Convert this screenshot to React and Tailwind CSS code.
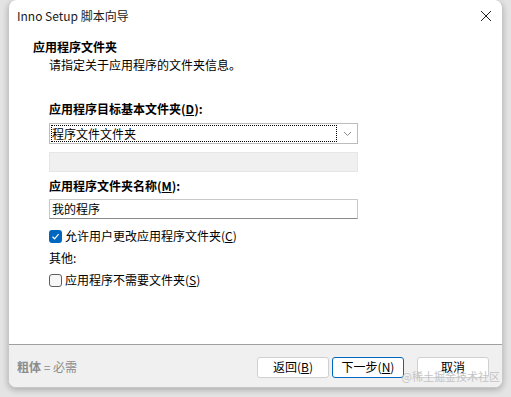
import React from "react";

const F = { fontFamily: '"Noto Sans CJK SC", "Noto Sans", sans-serif' };

function U({ children }) {
  return <span className="underline underline-offset-1">{children}</span>;
}

function Box({ checked }) {
  return checked ? (
    <span className="w-[13px] h-[13px] rounded-[3px] bg-[#0067c0] flex items-center justify-center shrink-0">
      <svg width="9" height="9" viewBox="0 0 9 9">
        <path d="M1.5 4.8 L3.6 6.8 L7.6 2.2" stroke="white" strokeWidth="1.2" fill="none" />
      </svg>
    </span>
  ) : (
    <span className="w-[13px] h-[13px] rounded-[3px] border border-[#5f5f5f] bg-[#f7f7f7] shrink-0" />
  );
}

export default function App() {
  return (
    <div
      className="w-[511px] h-[397px] bg-[#e4e4e4] pl-[8px] pt-0 overflow-hidden text-[12px] text-black"
      style={F}
    >
      <div className="w-[495px] h-[388px] rounded-t-[8px] rounded-b-[8px] bg-white border border-[#c8c8c8] border-t-0 shadow-[0_2px_6px_rgba(0,0,0,0.25)] flex flex-col overflow-hidden">
        <div className="h-[32px] flex items-center justify-between pl-[8px] pr-[10px] shrink-0">
          <span className="text-[12px] leading-none text-[#1a1a1a]">Inno Setup 脚本向导</span>
          <svg width="12" height="12" viewBox="0 0 12 12">
            <path d="M1 1 L11 11 M11 1 L1 11" stroke="#222" strokeWidth="1" />
          </svg>
        </div>
        <div className="flex-1 flex flex-col">
          <div className="pl-[24px] pt-[7px] font-bold leading-[16px]">应用程序文件夹</div>
          <div className="pl-[40px] leading-[16px] pt-[2px]">请指定关于应用程序的文件夹信息。</div>
          <div className="pl-[40px] pt-[28px] flex flex-col w-[349px]">
            <div className="font-bold leading-[16px]">
              应用程序目标基本文件夹(<U>D</U>):
            </div>
            <div className="mt-[6px] h-[21px] border border-[#bcbcbc] flex items-center">
              <div className="ml-[1px] h-[17px] w-[286px] border border-dotted border-black flex items-center leading-none">
                程序文件文件夹
              </div>
              <div className="flex-1 flex justify-center">
                <svg width="9" height="6" viewBox="0 0 9 6">
                  <path d="M1 1 L4.5 4.5 L8 1" stroke="#8a8a8a" strokeWidth="1" fill="none" />
                </svg>
              </div>
            </div>
            <div className="mt-[8px] h-[20px] bg-[#f0f0f0] border border-[#e6e6e6]" />
            <div className="mt-[6px] font-bold leading-[16px]">
              应用程序文件夹名称(<U>M</U>):
            </div>
            <div className="mt-[5px] h-[20px] border border-[#c8c8c8] border-b-[#8a8a8a] flex items-center pl-[2px] leading-none">
              我的程序
            </div>
            <div className="mt-[9px] flex items-center gap-[3px] leading-[16px]">
              <Box checked />
              <span>允许用户更改应用程序文件夹(<U>C</U>)</span>
            </div>
            <div className="mt-[6px] leading-[16px]">其他:</div>
            <div className="mt-[6px] flex items-center gap-[3px] leading-[16px]">
              <Box />
              <span>应用程序不需要文件夹(<U>S</U>)</span>
            </div>
          </div>
        </div>
        <div className="h-[43px] shrink-0 bg-[#f0f0f0] border-t border-[#a0a0a0] flex items-center pl-[8px] pr-[13px] pt-[2px] relative">
          <span className="text-[#8c8c8c]">
            <span className="font-bold">粗体</span> = 必需
          </span>
          <div className="ml-auto flex items-center">
            <button className="w-[72px] h-[21px] bg-white border border-[#d0d0d0] rounded-[3px] leading-none">
              返回(<U>B</U>)
            </button>
            <button className="ml-[3px] w-[72px] h-[21px] bg-white border border-[#0067c0] rounded-[3px] leading-none">
              下一步(<U>N</U>)
            </button>
            <button className="ml-[13px] w-[72px] h-[21px] bg-white border border-[#d0d0d0] rounded-[3px] leading-none">
              取消
            </button>
          </div>
          <span className="absolute right-[2px] bottom-[5px] text-[11px] text-[#c4c4c4] leading-none">
            @稀土掘金技术社区
          </span>
        </div>
      </div>
    </div>
  );
}
